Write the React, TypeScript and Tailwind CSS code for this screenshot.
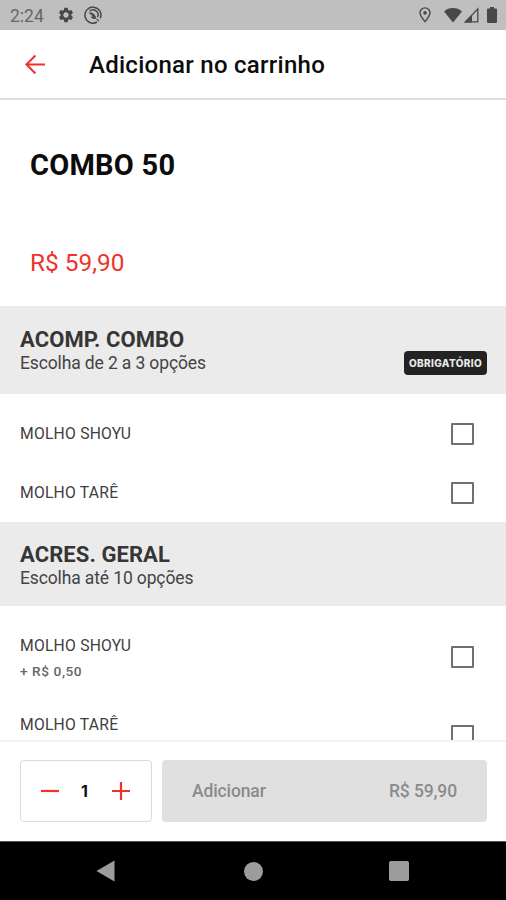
import React, { useState } from 'react'
import { MdSettings } from 'react-icons/md'

interface OptionProps {
  name: string
  price?: string
  className: string
}

interface SectionHeaderProps {
  title: string
  subtitle: string
  className: string
  required?: boolean
}

const StatusBar: React.FC = () => (
  <div className="flex h-[30px] shrink-0 items-center justify-between bg-[#bfbfbf] pr-[9px] pl-[10px] text-[#484848]">
    <div className="flex items-center">
      <span className="w-[47px] pt-px text-[17.5px] leading-[30px] text-[#666]">
        2:24
      </span>
      <MdSettings className="h-[18px] w-[18px]" />
      <svg viewBox="0 0 18 18" className="ml-[9px] h-[18px] w-[18px]" fill="none">
        <path
          d="M13 16A8 8 0 1 1 16.3 12.2"
          stroke="currentColor"
          strokeWidth="1.5"
        />
        <path
          d="M5.6 5.3A5 5 0 0 1 13.6 11"
          stroke="currentColor"
          strokeWidth="1.5"
        />
        <path
          d="M4.4 6.6C8.4 6.2 11.2 8 12.4 12.6C9.8 13.4 7.6 12.6 6.8 10.8L9 10.6Z"
          fill="currentColor"
        />
        <path d="M12.6 13L15 15.2" stroke="currentColor" strokeWidth="1.1" />
      </svg>
    </div>
    <div className="flex items-center">
      <svg viewBox="0 0 12 16" className="mr-[13px] h-[16px] w-[12px]" fill="none">
        <path
          d="M6 14.6C3.4 11.4 1 8.6 1 5.9A5 5 0 0 1 11 5.9C11 8.6 8.6 11.4 6 14.6Z"
          stroke="currentColor"
          strokeWidth="1.4"
        />
        <circle cx="6" cy="5.9" r="1.8" fill="currentColor" />
      </svg>
      <svg viewBox="0 0 18 15" className="h-[15px] w-[18px]" fill="currentColor">
        <path d="M9 14.6L0 3.4C2.4 1.2 5.5 0 9 0S15.6 1.2 18 3.4Z" />
      </svg>
      <svg viewBox="0 0 15 16" className="ml-[2px] h-[16px] w-[15px]" fill="none">
        <path d="M1.6 14.8H13.8V1.8Z" stroke="currentColor" strokeWidth="1.3" />
        <path d="M0 15.4L8 7.4V15.4Z" fill="currentColor" />
      </svg>
      <svg viewBox="0 0 10 16" className="ml-[8px] h-[16px] w-[10px]" fill="currentColor">
        <path d="M3 0H7V1.6H9Q10 1.6 10 2.6V15Q10 16 9 16H1Q0 16 0 15V2.6Q0 1.6 1 1.6H3Z" />
      </svg>
    </div>
  </div>
)

const Header: React.FC = () => (
  <header className="flex h-[70px] shrink-0 items-center border-b-2 border-[#dedede] pl-[25px]">
    <button className="w-[64px]">
      <svg
        viewBox="0 0 20 20"
        className="h-5 w-5"
        fill="none"
        stroke="#f0322b"
        strokeWidth="2"
      >
        <path d="M20 10.5H1.6M10.4 1.5L1.4 10.5L10.4 19.5" />
      </svg>
    </button>
    <h1 className="pt-px text-[24px] font-medium tracking-[0.27px] text-[#0c0c0c]">
      Adicionar no carrinho
    </h1>
  </header>
)

const SectionHeader: React.FC<SectionHeaderProps> = ({
  title,
  subtitle,
  className,
  required,
}) => (
  <div
    className={`flex shrink-0 items-start justify-between bg-[#ebebeb] pr-[19px] pl-[20px] ${className}`}
  >
    <div className="flex flex-col">
      <h3 className="text-[22px] leading-[24px] font-bold tracking-[0.08px] text-[#363636]">
        {title}
      </h3>
      <p className="text-[17.5px] leading-[22px] tracking-[-0.13px] text-[#444]">
        {subtitle}
      </p>
    </div>
    {required && (
      <span className="mt-[23px] flex h-6 w-[83px] items-center justify-center rounded-[4px] bg-[#232323] font-[Inter] text-[10px] font-extrabold tracking-[0.36px] text-[#e8e8e8]">
        OBRIGATÓRIO
      </span>
    )}
  </div>
)

const Option: React.FC<OptionProps> = ({ name, price, className }) => {
  const [checked, setChecked] = useState<boolean>(false)

  return (
    <div
      className={`flex shrink-0 items-center justify-between pr-[32px] pl-[20px] ${className}`}
    >
      <div className="flex flex-col">
        <p className="text-[15.7px] leading-[22px] tracking-[0.22px] text-[#404040]">
          {name}
        </p>
        {price !== undefined && (
          <p className="mt-[3px] h-[19px] text-[13.7px] leading-[22px] font-medium tracking-[0.55px] text-[#666]">
            {price}
          </p>
        )}
      </div>
      <button
        onClick={() => setChecked(!checked)}
        className={`h-[22px] w-[23px] rounded-[1px] border-2 border-[#707070] ${
          checked ? 'bg-[#f0322b]' : ''
        }`}
      />
    </div>
  )
}

const Footer: React.FC = () => {
  const [amount, setAmount] = useState<number>(1)

  return (
    <div className="flex h-[101px] shrink-0 gap-x-[10px] border-t-2 border-[#f4f4f4] bg-white pt-[18px] pr-[19px] pl-[20px]">
      <div className="flex h-[62px] w-[132px] items-center justify-between rounded-[4px] border-[1.5px] border-[#dadada] pr-[20px] pl-[19px]">
        <button onClick={() => setAmount(Math.max(1, amount - 1))}>
          <svg viewBox="0 0 20 20" className="h-5 w-5" stroke="#f0322b" strokeWidth="2.2">
            <path d="M1 10H19" />
          </svg>
        </button>
        <span className="mr-[2px] font-[Inter] text-[16px] font-bold text-[#111]">
          {amount}
        </span>
        <button onClick={() => setAmount(amount + 1)}>
          <svg viewBox="0 0 20 20" className="h-5 w-5" stroke="#f0322b" strokeWidth="2.2">
            <path d="M1 10H19M10 1V19" />
          </svg>
        </button>
      </div>
      <button className="flex h-[62px] flex-1 items-center justify-between rounded-[4px] bg-[#e0e0e0] px-[30px] pt-px text-[17.5px] font-medium tracking-[-0.12px] text-[#8b8b8b]">
        <span>Adicionar</span>
        <span>R$ 59,90</span>
      </button>
    </div>
  )
}

const NavigationBar: React.FC = () => (
  <div className="flex h-[59px] shrink-0 items-center border-t border-[#555] bg-black pl-[96px]">
    <svg viewBox="0 0 19 22" className="h-[22px] w-[19px]" fill="#9c9c9c">
      <path d="M0.5 11L18.5 0.5V21.5Z" />
    </svg>
    <div className="ml-[129px] h-[19px] w-[19px] rounded-full bg-[#9c9c9c]" />
    <div className="ml-[126px] h-5 w-5 rounded-[2px] bg-[#9c9c9c]" />
  </div>
)

export default function App() {
  return (
    <div className="flex h-[900px] w-[506px] flex-col overflow-hidden bg-white font-[Roboto,sans-serif]">
      <StatusBar />
      <Header />
      <main className="flex min-h-0 flex-1 flex-col overflow-hidden">
        <div className="flex h-[206px] shrink-0 flex-col pt-[47px] pl-[30px]">
          <h2 className="text-[29px] leading-[36px] font-bold tracking-[0.25px] text-[#0c0c0c]">
            COMBO 50
          </h2>
          <p className="mt-[65px] text-[24.4px] leading-[30px] text-[#f0322b]">
            R$ 59,90
          </p>
        </div>
        <SectionHeader
          title="ACOMP. COMBO"
          subtitle="Escolha de 2 a 3 opções"
          className="h-[88px] pt-[22px]"
          required
        />
        <Option name="MOLHO SHOYU" className="mt-[10px] h-[59px]" />
        <Option name="MOLHO TARÊ" className="h-[59px]" />
        <SectionHeader
          title="ACRES. GERAL"
          subtitle="Escolha até 10 opções"
          className="h-[84px] pt-[21px]"
        />
        <Option name="MOLHO SHOYU" price="+ R$ 0,50" className="mt-[11px] h-[79px]" />
        <Option name="MOLHO TARÊ" price="" className="h-[79px]" />
      </main>
      <Footer />
      <NavigationBar />
    </div>
  )
}
